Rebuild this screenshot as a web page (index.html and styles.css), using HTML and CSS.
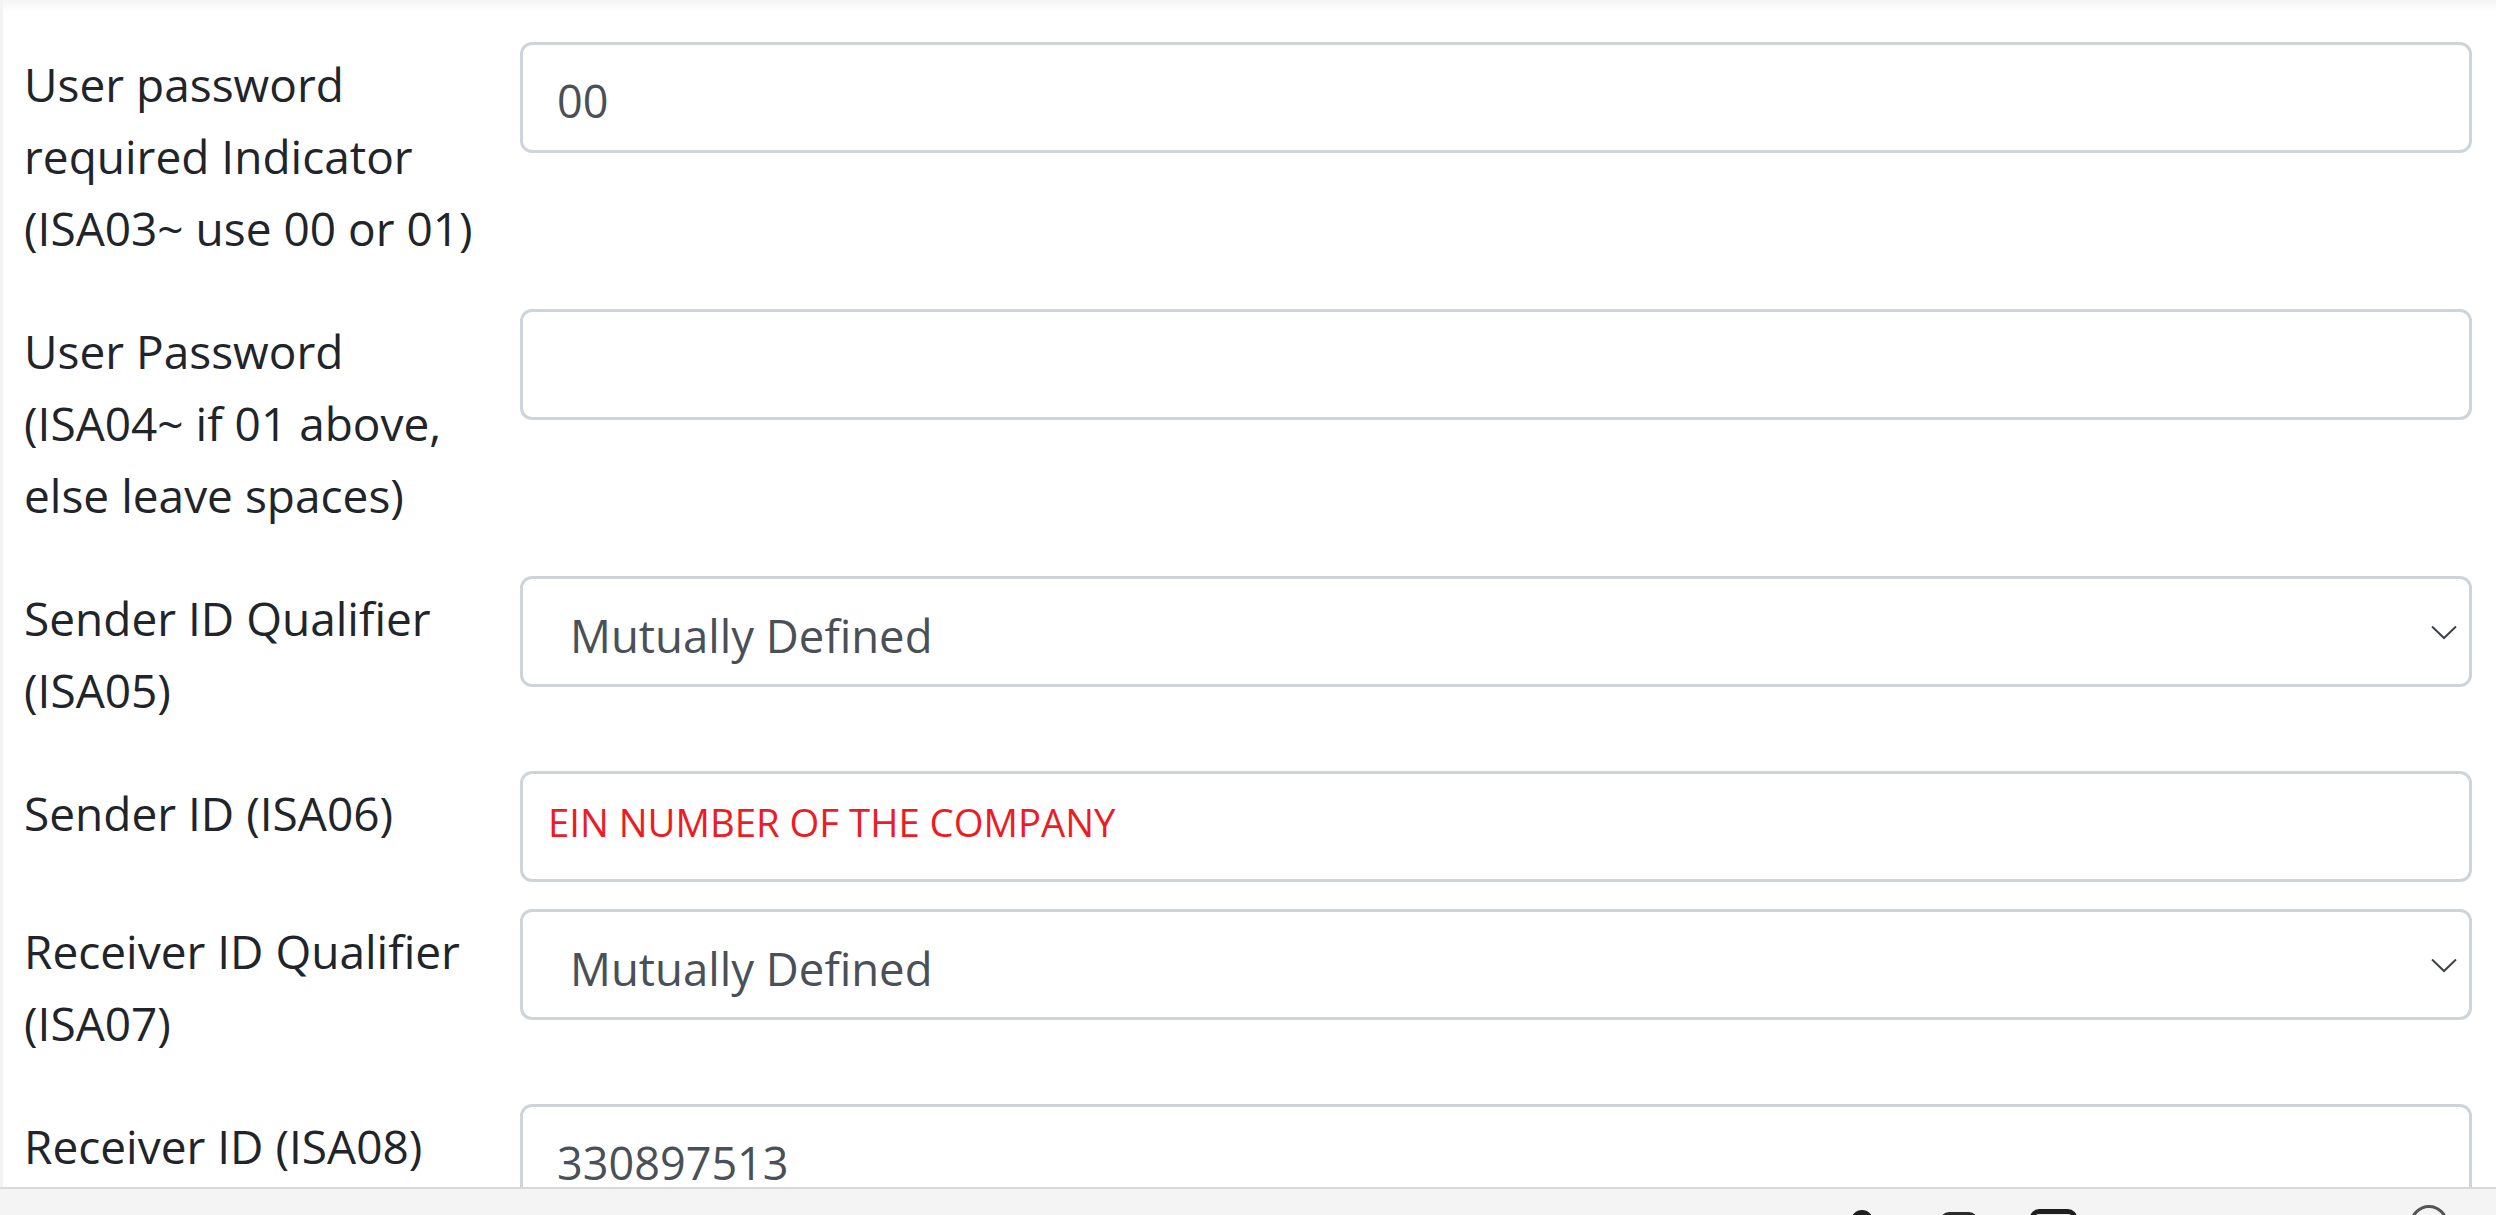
FILE: index.html
```html
<!DOCTYPE html>
<html>
<head>
  <title>EDI Settings - ISA Header</title>
  <link rel="stylesheet" href="styles.css">
</head>
<body>
  <div class="page">
    <form class="isa-form" id="isaForm">
      <div class="form-row">
        <label class="col-label" for="isa03">User password required Indicator (ISA03~ use 00 or 01)</label>
        <div class="col-field">
          <input type="text" id="isa03" class="field" value="00">
        </div>
      </div>

      <div class="form-row">
        <label class="col-label" for="isa04">User Password (ISA04~ if 01 above, else leave spaces)</label>
        <div class="col-field">
          <input type="text" id="isa04" class="field" value="">
        </div>
      </div>

      <div class="form-row">
        <label class="col-label" for="isa05">Sender ID Qualifier (ISA05)</label>
        <div class="col-field">
          <select id="isa05" class="field field-select">
            <option value="ZZ">Mutually Defined</option>
            <option value="01">DUNS Number</option>
            <option value="12">Phone Number</option>
          </select>
          <svg class="chevron" viewBox="0 0 26 15"><path d="M1 1.5 L13 13 L25 1.5" /></svg>
        </div>
      </div>

      <div class="form-row">
        <label class="col-label" for="isa06">Sender ID (ISA06)</label>
        <div class="col-field">
          <input type="text" id="isa06" class="field field-red" value="EIN NUMBER OF THE COMPANY">
        </div>
      </div>

      <div class="form-row">
        <label class="col-label" for="isa07">Receiver ID Qualifier (ISA07)</label>
        <div class="col-field">
          <select id="isa07" class="field field-select">
            <option value="ZZ">Mutually Defined</option>
            <option value="01">DUNS Number</option>
            <option value="12">Phone Number</option>
          </select>
          <svg class="chevron" viewBox="0 0 26 15"><path d="M1 1.5 L13 13 L25 1.5" /></svg>
        </div>
      </div>

      <div class="form-row">
        <label class="col-label" for="isa08">Receiver ID (ISA08)</label>
        <div class="col-field">
          <input type="text" id="isa08" class="field" value="330897513">
        </div>
      </div>
    </form>
  </div>

  <div class="taskbar">
    <span class="tb-icon tb-person"></span>
    <span class="tb-icon tb-card"></span>
    <span class="tb-icon tb-window"></span>
    <span class="tb-icon tb-circle"></span>
  </div>
</body>
</html>
```

FILE: styles.css
```css
html, body {
  margin: 0;
  height: 100%;
  overflow: hidden;
}
body {
  font-family: "Segoe UI", "Open Sans", Arial, sans-serif;
  color: #212529;
  background: #fff;
}
.page {
  height: 100%;
  box-sizing: border-box;
  border-left: 3px solid #f3f3f3;
  padding: 42px 12px 0 9px;
  background: linear-gradient(#f5f5f5, #fff 12px);
}
.form-row {
  display: flex;
  align-items: flex-start;
  margin-bottom: 27px;
}
.col-label {
  flex: 0 0 496px;
  box-sizing: border-box;
  padding: 6px 12px 18px;
  font-size: 46px;
  line-height: 72px;
}
.col-field {
  flex: 1;
  padding: 0 12px;
  position: relative;
}
.field {
  display: block;
  width: 100%;
  box-sizing: border-box;
  height: 111px;
  margin: 0;
  padding: 5px 34px 0;
  border: 3px solid #ced4da;
  border-radius: 12px;
  background: #fff;
  font-family: inherit;
  font-size: 45px;
  color: #495057;
  outline: none;
}
.field-select {
  -webkit-appearance: none;
  appearance: none;
  padding: 7px 60px 0 47px;
  font-size: 45.5px;
}
.field-red {
  font-size: 38.3px;
  color: #ed1c24;
  padding: 0 25px 10px;
}
.chevron {
  position: absolute;
  right: 27px;
  top: 50%;
  width: 26px;
  height: 15px;
  margin-top: -7px;
  pointer-events: none;
}
.chevron path {
  fill: none;
  stroke: #3d4349;
  stroke-width: 2;
}
.taskbar {
  position: fixed;
  left: 0;
  right: 0;
  bottom: 0;
  height: 28px;
  box-sizing: border-box;
  border-top: 2px solid #d9d9d9;
  background: #f4f4f4;
  display: flex;
  justify-content: flex-end;
  align-items: flex-start;
  padding-right: 48px;
  overflow: hidden;
}
.tb-icon {
  display: block;
  flex: none;
  box-sizing: border-box;
}
.tb-person {
  width: 22px;
  height: 30px;
  margin-top: 21px;
  border-radius: 11px 11px 3px 3px;
  background: #1f1f1f;
}
.tb-card {
  width: 38px;
  height: 30px;
  margin: 23px 0 0 67px;
  border-radius: 9px;
  background: #2b2b2b;
}
.tb-window {
  width: 47px;
  height: 40px;
  margin: 20px 0 0 52px;
  border: 5px solid #1f1f1f;
  border-radius: 9px;
  background: #e9e9e9;
}
.tb-circle {
  width: 38px;
  height: 38px;
  margin: 16px 0 0 333px;
  border: 3px solid #555;
  border-radius: 50%;
}
```
